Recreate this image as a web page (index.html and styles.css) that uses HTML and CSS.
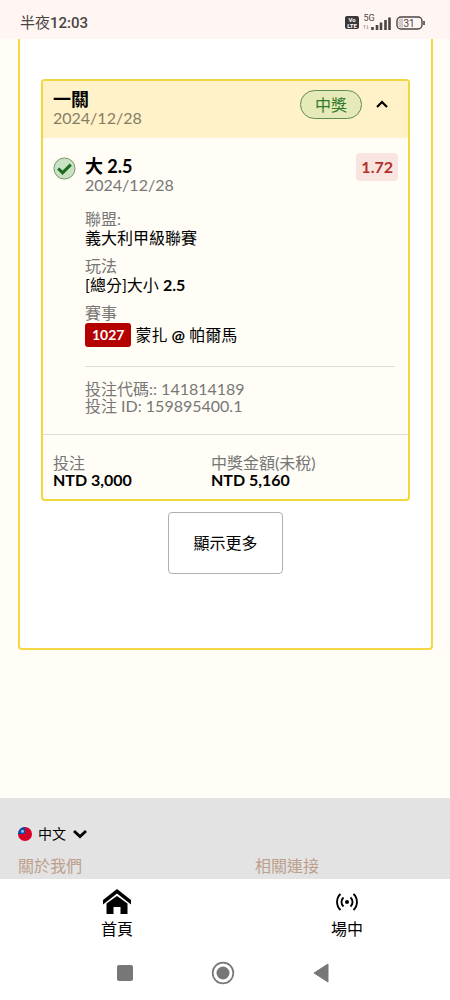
FILE: index.html
```html
<!DOCTYPE html>
<html lang="zh-Hant">
<head>
<meta charset="utf-8">
<meta name="viewport" content="width=device-width, initial-scale=1">
<title>投注紀錄</title>
<link rel="stylesheet" href="styles.css">
</head>
<body>
<header class="status">
  <span class="status-time">半夜<b>12:03</b></span>
  <svg class="status-icons" width="82" height="20" viewBox="0 0 82 20" role="img" aria-label="VoLTE 5G 31%">
    <rect x="1" y="3" width="14" height="13" rx="2" fill="#3c3838"/>
    <text x="8" y="9" class="tiny">Vo</text>
    <text x="8" y="15" class="tiny">LTE</text>
    <text x="25" y="8" class="net">5G</text>
    <path d="M20.500 12v4M19 13.500l1.500-1.500 1.500 1.500M23.500 12v4M22 14.500l1.500 1.500 1.500-1.500" fill="none" stroke="#aaa2a2" stroke-width=".7"/>
    <path d="M28.500 14v3M33 12v5M37 9.500v7.500M41.500 7v10M45.500 4.500v12.500" stroke="#4a4545" stroke-width="2.600"/>
    <rect x="53" y="4" width="25" height="12" rx="4" fill="#fff6f4" stroke="#4a4545" stroke-width="1.400"/>
    <path d="M56.500 5.500h2.500v9h-2.500a2 2 0 0 1-2-2v-5a2 2 0 0 1 2-2z" fill="#cfcaca"/>
    <path d="M80 8v4" stroke="#4a4545" stroke-width="1.600"/>
    <text x="65" y="14" class="battery">31</text>
  </svg>
</header>

<main class="page">
  <section class="panel">
    <article class="card">
      <div class="card-head">
        <div class="card-title">
          <h2 class="title">一關</h2>
          <p class="muted">2024/12/28</p>
        </div>
        <span class="pill">中獎</span>
        <button class="toggle" type="button" aria-label="收合" aria-expanded="true">
          <svg width="12" height="8" viewBox="0 0 12 8"><path d="M1 7l5-5 5 5" fill="none" stroke="#000" stroke-width="2.200"/></svg>
        </button>
      </div>

      <div class="bet">
        <svg class="check" width="23" height="23" viewBox="0 0 24 24" role="img" aria-label="中獎">
          <circle cx="12" cy="12" r="11" fill="#c9e2c2" stroke="#71906b"/>
          <path d="M5.500 12l4.500 4.500 8.500-8.500" fill="none" stroke="#1d6b21" stroke-width="3.200"/>
        </svg>
        <div class="bet-main">
          <div class="bet-head">
            <div>
              <h3 class="title">大 2.5</h3>
              <p class="muted">2024/12/28</p>
            </div>
            <span class="odds">1.72</span>
          </div>
          <dl class="details">
            <div><dt>聯盟:</dt><dd>義大利甲級聯賽</dd></div>
            <div><dt>玩法</dt><dd>[總分]大小 <b>2.5</b></dd></div>
            <div><dt>賽事</dt><dd class="match"><span class="code">1027</span><span>蒙扎 <b>@</b> 帕爾馬</span></dd></div>
          </dl>
          <div class="refs">
            <p>投注代碼:: 141814189</p>
            <p>投注 ID: 159895400.1</p>
          </div>
        </div>
      </div>

      <dl class="totals">
        <div><dt>投注</dt><dd>NTD 3,000</dd></div>
        <div><dt>中獎金額(未稅)</dt><dd>NTD 5,160</dd></div>
      </dl>
    </article>
    <button class="more" type="button">顯示更多</button>
  </section>
</main>

<footer class="footer">
  <label class="lang">
    <svg width="14" height="14" viewBox="0 0 14 14" aria-hidden="true">
      <circle cx="7" cy="7" r="7" fill="#d80027"/>
      <path d="M7 7H0a7 7 0 0 1 7-7z" fill="#0052b4"/>
      <circle cx="4.500" cy="4.300" r="1.500" fill="#8fc0ea"/>
    </svg>
    <select class="lang-select" aria-label="語言"><option>中文</option></select>
    <svg width="16" height="10" viewBox="0 0 16 10" aria-hidden="true"><path d="M2 2l6 5.500L14 2" fill="none" stroke="#000" stroke-width="2.800"/></svg>
  </label>
  <div class="links">
    <a href="#about">關於我們</a>
    <a href="#links">相關連接</a>
  </div>
</footer>

<nav class="tabs">
  <a class="tab" href="#home">
    <svg width="28" height="26" viewBox="0 0 28 26" aria-hidden="true">
      <path d="M0 11L14 0l14 11v4.500L14 4.500 0 15.500z"/>
      <path d="M3.500 14.500L14 7l10.500 7.500V25h-7v-7h-7v7h-7z"/>
    </svg>
    <span>首頁</span>
  </a>
  <a class="tab" href="#live">
    <svg width="22" height="26" viewBox="0 0 22 26" aria-hidden="true">
      <circle cx="11" cy="13" r="2"/>
      <path d="M7.500 8.500a6 6 0 0 0 0 9M14.500 8.500a6 6 0 0 1 0 9M4.500 5a11 11 0 0 0 0 16M17.500 5a11 11 0 0 1 0 16" fill="none" stroke="#000" stroke-width="1.900"/>
    </svg>
    <span>場中</span>
  </a>
</nav>

<div class="system">
  <button type="button" aria-label="最近使用"><svg width="24" height="24" viewBox="0 0 24 24"><rect x="4" y="4" width="16" height="16" rx="2" fill="#777"/></svg></button>
  <button type="button" aria-label="主畫面"><svg width="24" height="24" viewBox="0 0 24 24"><circle cx="12" cy="12" r="10.300" fill="none" stroke="#777" stroke-width="1.700"/><circle cx="12" cy="12" r="6.500" fill="#777"/></svg></button>
  <button type="button" aria-label="返回"><svg width="24" height="24" viewBox="0 0 24 24"><path d="M5 12L19 3v18z" fill="#777" stroke="#777" stroke-linejoin="round"/></svg></button>
</div>
</body>
</html>
```
FILE: styles.css
```css
* { box-sizing: border-box; }

body {
  margin: 0;
  min-height: 100vh;
  display: flex;
  flex-direction: column;
  background: #fff;
  color: #000;
  font: 16px/19px Lato, "Noto Sans CJK TC", sans-serif;
}

h2, h3, p, dl, dd { margin: 0; }
a { text-decoration: none; color: inherit; }
button { font: inherit; color: inherit; background: none; border: 0; padding: 0; }
svg { display: block; flex: none; }

.status {
  display: flex;
  justify-content: space-between;
  align-items: center;
  padding: 7px 24px 0 20px;
  height: 39px;
  background: #fff5f3;
}
.status-time { font: 400 15px/20px Roboto, "Noto Sans CJK TC", sans-serif; color: #4a4545; }
.status-time b { font-weight: 500; }
.tiny { font: 700 6px Roboto, sans-serif; text-anchor: middle; fill: #fff; }
.net { font: 9px Roboto, sans-serif; text-anchor: middle; fill: #4a4545; }
.battery { font: 10px Roboto, sans-serif; text-anchor: middle; fill: #4a4545; }

.page {
  flex: 1;
  padding: 0 17px 16px 18px;
  background: #fffdf5;
}
.panel {
  display: flex;
  flex-direction: column;
  padding: 40px 21px 74px;
  border: 2px solid #f4d742;
  border-top: 0;
  border-radius: 0 0 4px 4px;
  background: #fff;
}
.card {
  border: 2px solid #f0d83c;
  border-radius: 4px;
  background: #fffdf5;
}
.card-head {
  display: flex;
  align-items: flex-start;
  padding: 9px 16px 11px 10px;
  background: #fff2c8;
}
.card-title { flex: 1; }
.title { font-size: 18px; line-height: 18px; font-weight: 700; }
.muted, dt, .refs { color: #777; }
.card-head .muted { color: #857d66; }
.pill {
  padding: 4px 14px;
  border: 1px solid #5f8f4e;
  border-radius: 15px;
  background: #e6e9b8;
  color: #2f7a2b;
}
.toggle { padding: 10px 4px; margin-left: 10px; }

.bet {
  display: flex;
  gap: 9px;
  padding: 19px 13px 20px 10px;
}
.bet-main { flex: 1; }
.bet-head {
  display: flex;
  justify-content: space-between;
  align-items: flex-start;
  margin: 0 -3px 15px 0;
}
.odds {
  padding: 4px 5px 5px;
  margin-top: -4px;
  border-radius: 4px;
  background: #f9e5df;
  color: #b3302a;
  font-weight: 700;
}
.details { display: grid; gap: 9px; }
.match { display: flex; align-items: center; gap: 4px; line-height: 26px; }
.code {
  padding: 0 7px;
  border-radius: 3px;
  background: #b40000;
  color: #fff;
  font-size: 14px;
  line-height: 24px;
  font-weight: 700;
}
.refs {
  margin-top: 18px;
  padding-top: 13px;
  border-top: 1px solid #dddcd6;
  line-height: 17px;
}
.totals {
  display: grid;
  grid-template-columns: 158px 1fr;
  padding: 19px 10px 11px;
  border-top: 1px solid #dddcd6;
  line-height: 17px;
}
.totals dd { font-weight: 700; }
.more {
  align-self: center;
  margin-top: 11px;
  padding: 20px 24px;
  line-height: 20px;
  border: 1px solid #aeb0b0;
  border-radius: 4px;
}

.footer { padding: 26px 18px 4px; background: #e3e3e3; }
.lang { display: inline-flex; align-items: center; gap: 6px; height: 20px; }
.lang-select {
  appearance: none;
  border: 0;
  padding: 0;
  background: none;
  color: inherit;
  font: 14px/20px Lato, "Noto Sans CJK TC", sans-serif;
}
.links {
  display: grid;
  grid-template-columns: 237px 1fr;
  margin-top: 12px;
  color: #bd9f8d;
}

.tabs {
  display: flex;
  gap: 40px;
  padding: 10px 8px 8px 22px;
}
.tab {
  flex: 1;
  display: flex;
  flex-direction: column;
  align-items: center;
  gap: 4px;
}
.system {
  display: flex;
  justify-content: center;
  gap: 74px;
  padding: 15px 4px 15px 0;
}
```
